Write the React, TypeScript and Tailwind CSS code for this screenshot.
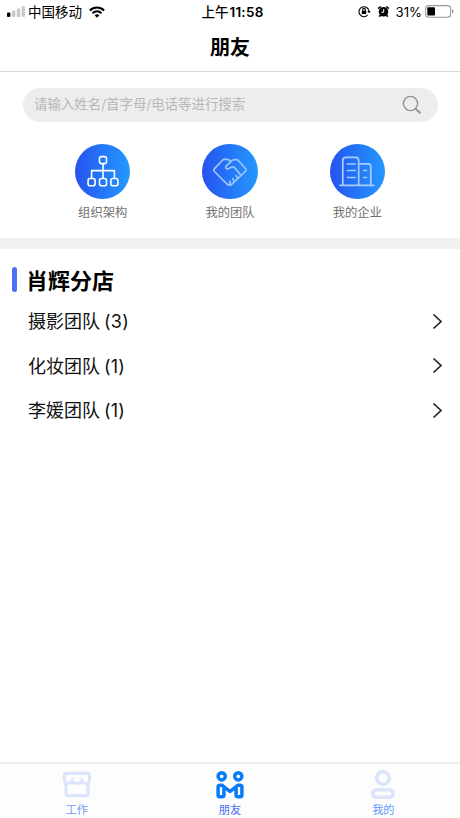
import type { ReactNode } from "react";

function StatusBar() {
  return (
    <div className="flex h-6 shrink-0 items-center text-[13.5px] leading-none text-black">
      <div className="flex flex-1 items-center pl-[7px]">
        <svg className="h-3 w-[19px] shrink-0" viewBox="0 0 19 12">
          <rect x="0" y="6.5" width="3.4" height="4.5" rx="1" fill="#000" />
          <rect x="5" y="4.5" width="3.4" height="6.5" rx="1" fill="#c9c9c9" />
          <rect x="9.8" y="2.5" width="3.4" height="8.5" rx="1" fill="#c9c9c9" />
          <rect x="14.6" y="0.3" width="3.4" height="10.7" rx="1" fill="#c9c9c9" />
        </svg>
        <span className="ml-[2px] whitespace-nowrap pt-[2px]">中国移动</span>
        <svg className="ml-[7px] h-3 w-4 shrink-0" viewBox="0 0 16 12" fill="none" stroke="#000" strokeWidth="2.2">
          <path d="M.9 4.500C5 .5 11 .5 15.100 4.500" />
          <path d="M3.500 7.200C6.100 4.800 9.900 4.800 12.500 7.200" />
          <path d="M8 11.700 5.600 9.200Q8 7.500 10.400 9.200Z" fill="#000" stroke="none" />
        </svg>
      </div>
      <div className="whitespace-nowrap pl-[4px] pt-[2px] font-medium">
        上午<span className="ml-px text-[13.500px] font-semibold tracking-[0.250px]">11:58</span>
      </div>
      <div className="flex flex-1 items-center justify-end pr-[6px]">
        <svg className="h-[13px] w-[13px]" viewBox="0 0 13 13" fill="none" stroke="#000" strokeWidth="1.1">
          <path d="M9.600 10.200A5 5 0 1 1 11 6.200" />
          <path d="M9.300 5.900h3.500L11 8.300Z" fill="#000" stroke="none" />
          <rect x="3.800" y="5.800" width="4.400" height="3.300" fill="#000" stroke="none" />
          <path d="M4.700 6V4.700a1.300 1.300 0 0 1 2.600 0V6" />
        </svg>
        <svg className="ml-[6px] h-[13px] w-[13px]" viewBox="0 0 13 13" fill="none">
          <circle cx="6.500" cy="6.800" r="4.800" fill="#000" />
          <path d="M1.200 3.700 3.700 1.500M11.800 3.700 9.300 1.500M3.300 10.300 2.300 11.700M9.700 10.300 10.700 11.700" stroke="#000" strokeWidth="1.600" />
          <path d="M6.700 4v3.300H4.300" stroke="#fff" strokeWidth="1" />
        </svg>
        <span className="ml-[6px] pt-px text-[13.200px]">31%</span>
        <svg className="ml-[3px] h-[13px] w-[29px]" viewBox="0 0 29 13">
          <rect x=".6" y=".6" width="25" height="11.600" rx="3" fill="none" stroke="#999" strokeWidth="1.100" />
          <rect x="2.300" y="2.300" width="7.700" height="8.200" rx="1" fill="#000" />
          <path d="M27 4.300c2 .7 2 3.500 0 4.200z" fill="#999" />
        </svg>
      </div>
    </div>
  );
}

function OrgIcon() {
  return (
    <svg className="h-[34px] w-[34px]" viewBox="0 0 34 34" fill="none" stroke="#fff" strokeWidth="1.600">
      <rect x="13.500" y="2.600" width="7" height="7" rx="2" />
      <path d="M17 9.600v14.900M5.600 24.500v-7.900h22.800v7.900" />
      <rect x="2.100" y="24.500" width="7" height="7.200" rx="2" />
      <rect x="13.500" y="24.500" width="7" height="7.200" rx="2" />
      <rect x="24.900" y="24.500" width="7" height="7.200" rx="2" />
    </svg>
  );
}

function HandshakeIcon() {
  return (
    <svg className="h-[34px] w-[36px]" viewBox="0 0 36 34" fill="none" stroke="#9cc6ff" strokeWidth="1.700" strokeLinecap="round" strokeLinejoin="round">
      <path d="M19 7.500 17 6Q16.200 5.400 15 5.400H12.500Q11.200 5.400 10.200 6.500L2.300 14.900Q1.200 16.200 2.400 17.500L15 30Q17.700 32.200 20.200 30L33.600 17.200Q34.700 16 33.600 14.700L26.400 6.500Q25.300 5.300 23.500 5.600L21 6Q19.800 6.200 19 7.500L14.300 11.800C12.800 13.900 14.600 15.700 16.700 14.600L20 13C21.800 12.500 22.800 13.500 23.600 14.700L28.800 21.300" />
      <path d="M18 27.200v3M21 24.500l.8 3.300M24.200 21.700l1.400 2.800" />
    </svg>
  );
}

function BuildingIcon() {
  return (
    <svg className="h-[34px] w-[36px]" viewBox="0 0 36 34" fill="none" stroke="#a8ccff" strokeWidth="1.700" strokeLinecap="round">
      <path d="M1 31.300h34M3.800 31V6.500q0-3.200 3.200-3.200h9.500q3.200 0 3.200 3.200V31M20 9.800h9.300q2.500 0 2.500 2.500V31" />
      <path d="M8.500 10h7.500M8.500 16.500h7.500M8.500 23.500h7.500M24.800 16.500h2.600M24.800 23.500h2.600" />
    </svg>
  );
}

function Shortcut({ label, children }: { label: string; children: ReactNode }) {
  return (
    <div className="flex w-[127.300px] flex-col items-center">
      <div className="flex h-[55.500px] w-[55.500px] items-center justify-center rounded-full bg-linear-to-r from-[#2851ef] to-[#2598fe]">
        {children}
      </div>
      <span className="mt-[5px] text-[12.300px] leading-[18px] text-[#707070]">{label}</span>
    </div>
  );
}

function TeamRow({ name, count }: { name: string; count: number }) {
  return (
    <div className="flex h-[44.500px] items-center justify-between pl-[28px] pr-[17px]">
      <span className="pt-[2px] text-[18px] leading-[26px] text-[#111]">
        {name} <span className="-ml-px tracking-[0.200px]">({count})</span>
      </span>
      <svg className="h-[17px] w-[11px]" viewBox="0 0 11 17" fill="none" stroke="#222" strokeWidth="1.700">
        <path d="m1.500 1.500 7.500 7-7.500 7" />
      </svg>
    </div>
  );
}

function Tab({ label, color, children }: { label: string; color: string; children: ReactNode }) {
  return (
    <div className="flex flex-1 flex-col items-center pt-[6px]">
      {children}
      <span className={"mt-px text-[11.200px] leading-4 " + color}>{label}</span>
    </div>
  );
}

export default function App() {
  return (
    <div className="flex h-[818px] w-[460px] flex-col overflow-hidden bg-white font-[Inter,'Noto_Sans_CJK_SC',sans-serif]">
      <StatusBar />
      <header className="flex h-12 shrink-0 items-center justify-center border-b border-[#dadada] text-[20px] font-bold text-black">
        朋友
      </header>
      <div className="mx-[22.500px] mt-4 flex h-[33.500px] shrink-0 items-center justify-between rounded-full bg-[#ededed] pl-[11.500px] pr-[16px]">
        <span className="pb-[2px] text-[13.450px] leading-5 text-[#b8b8b8]">请输入姓名/首字母/电话等进行搜索</span>
        <svg className="h-5 w-5" viewBox="0 0 20 20" fill="none" stroke="#929292">
          <circle cx="8.500" cy="8.500" r="7.100" strokeWidth="1.400" />
          <path d="m13.500 13.700 5 4.500" strokeWidth="2" />
        </svg>
      </div>
      <div className="mt-[22px] flex h-[94.500px] shrink-0 justify-center">
        <Shortcut label="组织架构"><OrgIcon /></Shortcut>
        <Shortcut label="我的团队"><HandshakeIcon /></Shortcut>
        <Shortcut label="我的企业"><BuildingIcon /></Shortcut>
      </div>
      <div className="h-[11px] shrink-0 bg-[#f1f1f1]" />
      <main className="flex-1 pt-[13px]">
        <div className="flex h-[37px] items-center pl-[11.500px]">
          <span className="mb-[2px] h-[25px] w-[5.500px] rounded-full bg-[#4b70f8]" />
          <h2 className="ml-[9px] text-[22px] font-bold leading-8 text-black">肖辉分店</h2>
        </div>
        <TeamRow name="摄影团队" count={3} />
        <TeamRow name="化妆团队" count={1} />
        <TeamRow name="李媛团队" count={1} />
      </main>
      <nav className="flex h-[56px] shrink-0 border-t-2 border-[#ececec] bg-[#fdfdfe]">
        <Tab label="工作" color="text-[#6f9cf5]">
          <svg className="h-[31px] w-[30px] shrink-0" viewBox="0 0 30 31" fill="none" stroke="#dce4fb" strokeWidth="3.200" strokeLinejoin="round">
            <path d="M4 14V24q0 1.600 1.600 1.600h18.800q1.600 0 1.600-1.600V14" />
            <path d="M3 3.300h24q1.200 3.300.4 7.500-1 2.700-2.700 2.700-3.500 0-4.700-2-2 2-5 2t-5-2q-1.200 2-4.700 2-1.700 0-2.700-2.700-.8-4.200.4-7.500Z" />
            <path d="M10.200 7.500V12M19.800 7.500V12" strokeWidth="2" />
          </svg>
        </Tab>
        <Tab label="朋友" color="text-[#496ef2]">
          <svg className="h-[31px] w-[30px] shrink-0" viewBox="0 0 30 31" fill="none" stroke="#087cf8" strokeWidth="3.500" strokeLinejoin="round">
            <circle cx="6.700" cy="6.300" r="3.600" />
            <circle cx="23.300" cy="6.300" r="3.600" />
            <path d="M5 15.300h2.200L15 21.500l7.800-6.200H25q1.900 0 1.900 1.900v7.800q0 1.800-1.800 1.800h-2.200q-1.800 0-1.800-1.800V18M8.900 18v7q0 1.800-1.800 1.800H4.900q-1.800 0-1.800-1.800v-7.800q0-1.900 1.900-1.900" />
          </svg>
        </Tab>
        <Tab label="我的" color="text-[#6498fb]">
          <svg className="h-[31px] w-[30px] shrink-0" viewBox="0 0 30 31" fill="none" stroke="#dce4fb" strokeWidth="3.500">
            <circle cx="15" cy="8" r="6.300" />
            <rect x="4.800" y="19.700" width="20.400" height="7.600" rx="3.800" />
          </svg>
        </Tab>
      </nav>
    </div>
  );
}
